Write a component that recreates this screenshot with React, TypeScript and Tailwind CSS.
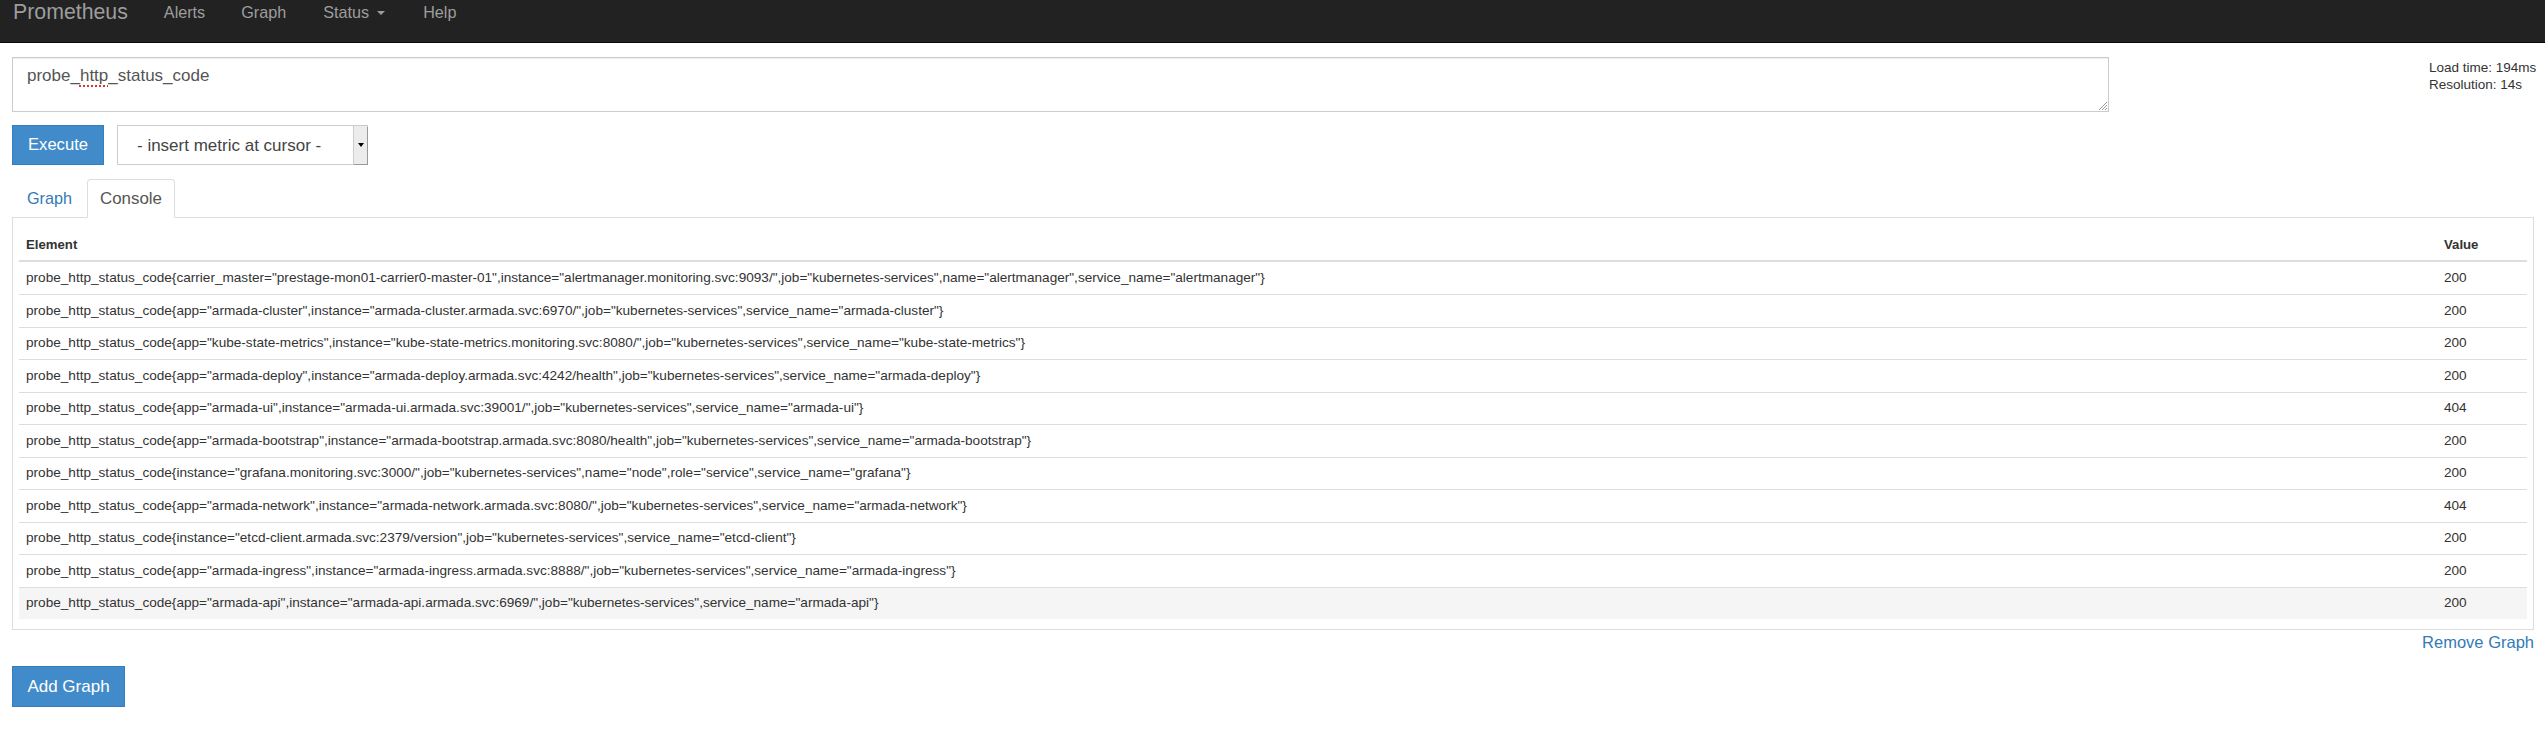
import React from "react";

const rows: { metric: string; value: string }[] = [
  {
    metric:
      'probe_http_status_code{carrier_master="prestage-mon01-carrier0-master-01",instance="alertmanager.monitoring.svc:9093/",job="kubernetes-services",name="alertmanager",service_name="alertmanager"}',
    value: "200",
  },
  {
    metric:
      'probe_http_status_code{app="armada-cluster",instance="armada-cluster.armada.svc:6970/",job="kubernetes-services",service_name="armada-cluster"}',
    value: "200",
  },
  {
    metric:
      'probe_http_status_code{app="kube-state-metrics",instance="kube-state-metrics.monitoring.svc:8080/",job="kubernetes-services",service_name="kube-state-metrics"}',
    value: "200",
  },
  {
    metric:
      'probe_http_status_code{app="armada-deploy",instance="armada-deploy.armada.svc:4242/health",job="kubernetes-services",service_name="armada-deploy"}',
    value: "200",
  },
  {
    metric:
      'probe_http_status_code{app="armada-ui",instance="armada-ui.armada.svc:39001/",job="kubernetes-services",service_name="armada-ui"}',
    value: "404",
  },
  {
    metric:
      'probe_http_status_code{app="armada-bootstrap",instance="armada-bootstrap.armada.svc:8080/health",job="kubernetes-services",service_name="armada-bootstrap"}',
    value: "200",
  },
  {
    metric:
      'probe_http_status_code{instance="grafana.monitoring.svc:3000/",job="kubernetes-services",name="node",role="service",service_name="grafana"}',
    value: "200",
  },
  {
    metric:
      'probe_http_status_code{app="armada-network",instance="armada-network.armada.svc:8080/",job="kubernetes-services",service_name="armada-network"}',
    value: "404",
  },
  {
    metric:
      'probe_http_status_code{instance="etcd-client.armada.svc:2379/version",job="kubernetes-services",service_name="etcd-client"}',
    value: "200",
  },
  {
    metric:
      'probe_http_status_code{app="armada-ingress",instance="armada-ingress.armada.svc:8888/",job="kubernetes-services",service_name="armada-ingress"}',
    value: "200",
  },
  {
    metric:
      'probe_http_status_code{app="armada-api",instance="armada-api.armada.svc:6969/",job="kubernetes-services",service_name="armada-api"}',
    value: "200",
  },
];

function Navbar() {
  return (
    <nav className="flex h-[43px] items-start border-b border-[#080808] bg-[#222] pl-[13px] text-[#9d9d9d]">
      <span className="text-[21.3px] leading-[25px]">Prometheus</span>
      <span className="ml-[36px] text-[16.2px] leading-[25px]">Alerts</span>
      <span className="ml-[36px] text-[16.2px] leading-[25px]">Graph</span>
      <span className="ml-[37px] flex items-center text-[16.2px] leading-[25px]">
        Status
        <span className="ml-[8px] mt-[1px] h-0 w-0 border-x-[4px] border-t-[4px] border-x-transparent border-t-[#9d9d9d]" />
      </span>
      <span className="ml-[38px] text-[16.2px] leading-[25px]">Help</span>
    </nav>
  );
}

function ExpressionInput() {
  return (
    <div className="relative h-[55px] border border-[#ccc] bg-white pl-[14px] pt-[8px] text-[17px] leading-[20px] text-[#555] shadow-[inset_0_1px_1px_rgba(0,0,0,0.075)]">
      probe_
      <span className="underline decoration-[#e0332f] decoration-dotted decoration-2 underline-offset-[4px]">http</span>
      _status_code
      <svg className="absolute bottom-[1px] right-[1px]" width="9" height="9" viewBox="0 0 9 9">
        <path d="M9 1L1 9M9 4L4 9M9 7L7 9" stroke="#999" strokeWidth="1" />
      </svg>
    </div>
  );
}

export default function App() {
  return (
    <div className="min-h-screen w-full bg-white font-['Liberation_Sans',Arial,sans-serif] text-[#333]">
      <Navbar />

      <main className="pl-[12px] pr-[11px]">
        <div className="mt-[14px] flex items-start">
          <div className="w-[2097px]">
            <ExpressionInput />
            <div className="mt-[13px] flex gap-[13px]">
              <button
                type="button"
                className="h-[40px] w-[92px] border border-[#357ebd] bg-[#428bca] pt-[1px] text-[16.6px] text-white"
              >
                Execute
              </button>
              <div className="flex h-[40px] w-[251px] border border-[#ccc] bg-white text-[17px] text-[#444]">
                <span className="flex flex-1 items-center pl-[19px] pt-[1px]">- insert metric at cursor -</span>
                <span className="flex w-[14px] items-center justify-center border-l border-[#ccc] bg-[#ececec] shadow-[1px_1px_0_#999]">
                  <span className="h-0 w-0 border-x-[3px] border-t-[4px] border-x-transparent border-t-black" />
                </span>
              </div>
            </div>
          </div>
          <div className="ml-auto w-[105px] whitespace-nowrap pt-[2px] text-[13.5px] leading-[17px]">
            <div>Load time: 194ms</div>
            <div>Resolution: 14s</div>
          </div>
        </div>

        <div className="mt-[14px] flex border-b border-[#ddd]">
          <span className="flex h-[38px] w-[75px] items-center justify-center text-[16.2px] text-[#337ab7]">
            Graph
          </span>
          <span className="-mb-px flex h-[39px] w-[88px] items-center justify-center rounded-t-[4px] border border-[#ddd] border-b-transparent bg-white text-[16.9px] text-[#555]">
            Console
          </span>
        </div>

        <section className="border-x border-b border-[#ddd] px-[6px] pb-[10px] pt-[11px]">
          <div className="flex h-[33px] items-center border-b-2 border-[#ddd] text-[13.2px] font-bold">
            <div className="flex-1 px-[7px]">Element</div>
            <div className="w-[91px] px-[8px]">Value</div>
          </div>
          {rows.map((row, i) => (
            <div
              key={i}
              className={
                "flex items-center text-[13.6px] " +
                (i === 0 ? "h-[32px] pt-[1px] " : "h-[32.5px] border-t border-[#ddd] ") +
                (i === rows.length - 1 ? "bg-[#f5f5f5]" : "")
              }
            >
              <div className="flex-1 whitespace-nowrap px-[7px]">{row.metric}</div>
              <div className="w-[91px] px-[8px]">{row.value}</div>
            </div>
          ))}
        </section>

        <div className="flex justify-end">
          <span className="text-[16.5px] leading-[24px] text-[#337ab7]">Remove Graph</span>
        </div>

        <button
          type="button"
          className="mt-[12px] h-[41px] w-[113px] border border-[#357ebd] bg-[#428bca] text-[17px] text-white"
        >
          Add Graph
        </button>
      </main>
    </div>
  );
}
